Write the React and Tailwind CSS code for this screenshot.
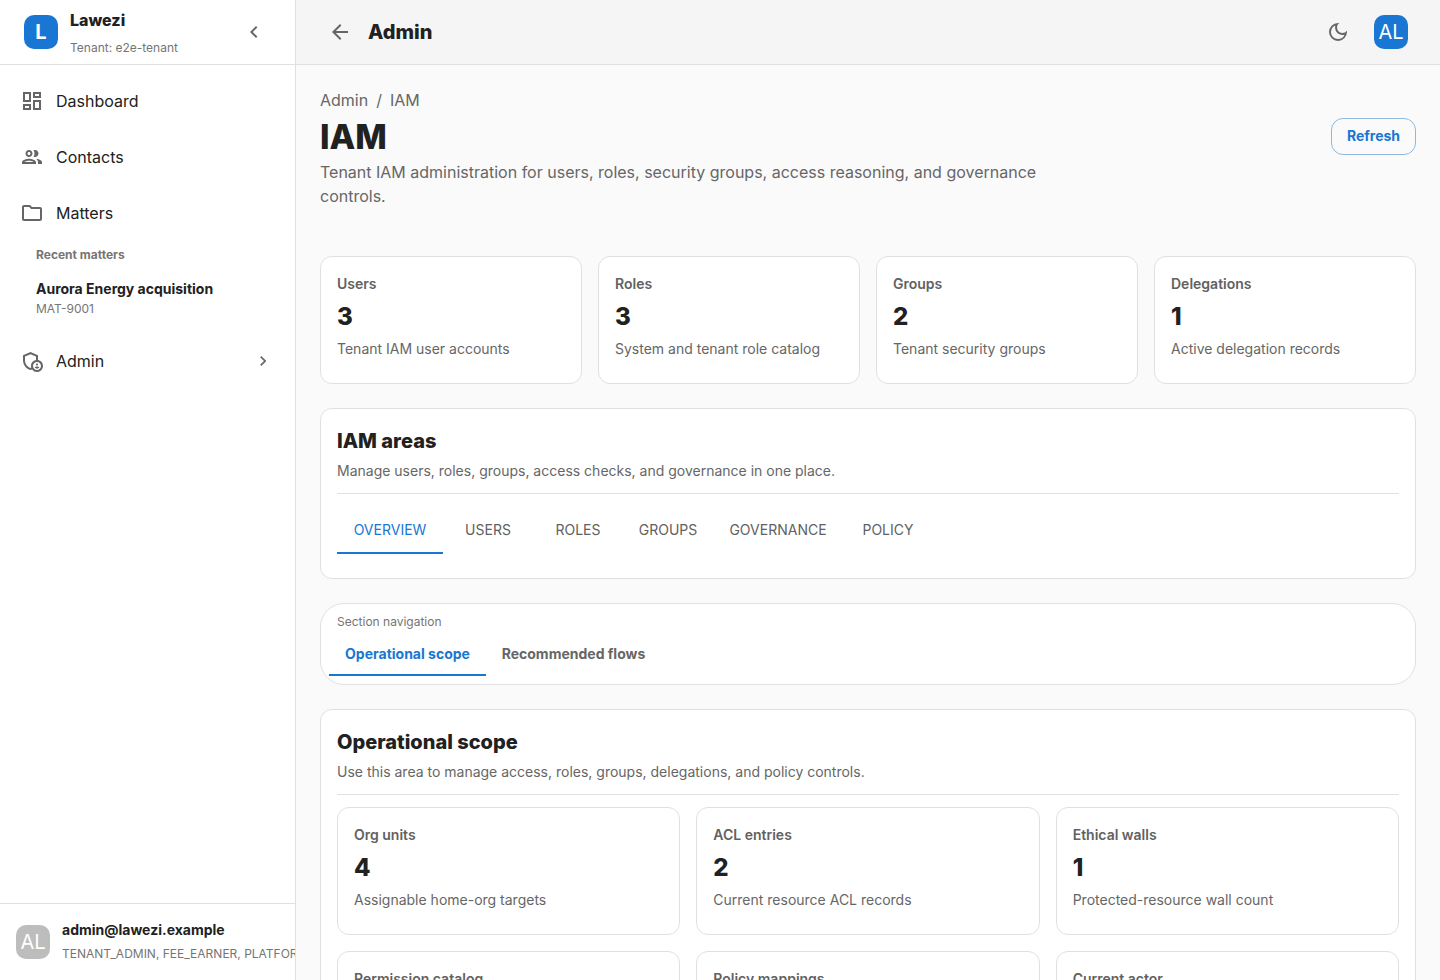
import { MdArrowBack, MdChevronLeft, MdChevronRight, MdOutlineAdminPanelSettings, MdOutlineDarkMode, MdOutlineDashboard, MdOutlineFolder, MdOutlineGroup } from "react-icons/md";

const topStats = [
  { label: "Users", value: "3", note: "Tenant IAM user accounts" },
  { label: "Roles", value: "3", note: "System and tenant role catalog" },
  { label: "Groups", value: "2", note: "Tenant security groups" },
  { label: "Delegations", value: "1", note: "Active delegation records" },
];

const scopeStats = [
  { label: "Org units", value: "4", note: "Assignable home-org targets" },
  { label: "ACL entries", value: "2", note: "Current resource ACL records" },
  { label: "Ethical walls", value: "1", note: "Protected-resource wall count" },
  { label: "Permission catalog", value: "12", note: "Known permissions" },
  { label: "Policy mappings", value: "6", note: "Mapped policy records" },
  { label: "Current actor", value: "1", note: "Signed-in actor" },
];

const tabs = [
  { label: "OVERVIEW", className: "w-[106px] shadow-[inset_0_-2px_0_#1976d2] text-[#1976d2]" },
  { label: "USERS", className: "w-[90px] text-[#616161]" },
  { label: "ROLES", className: "w-[90px] text-[#616161]" },
  { label: "GROUPS", className: "w-[90px] text-[#616161]" },
  { label: "GOVERNANCE", className: "w-[130px] text-[#616161]" },
  { label: "POLICY", className: "w-[90px] text-[#616161]" },
];

function StatCard({ stat }) {
  return (
    <div className="h-[128px] rounded-xl border border-[#e0e0e0] bg-white px-4 pt-[17px]">
      <div className="text-sm leading-5 font-semibold text-[#616161]">{stat.label}</div>
      <div className="mt-[7px] text-[24px] leading-[32px] font-extrabold text-[#212121]">{stat.value}</div>
      <div className="mt-[6px] text-sm leading-5 text-[#666]">{stat.note}</div>
    </div>
  );
}

function NavItem({ icon: Icon, label, right }) {
  return (
    <div className="flex h-12 items-center pl-[20px] pr-[22px]">
      <Icon className="h-6 w-6 text-[#666]" />
      <span className="ml-3 flex-1 text-base text-[#212121]">{label}</span>
      {right}
    </div>
  );
}

export default function App() {
  return (
    <div className="flex h-[980px] overflow-hidden bg-[#fafafa] font-['Inter',sans-serif]">
      {/* Sidebar */}
      <aside className="flex w-[296px] shrink-0 flex-col overflow-hidden border-r border-[#e0e0e0] bg-white">
        <div className="flex h-[65px] shrink-0 items-center border-b border-[#e0e0e0] pl-6 pr-[29px]">
          <div className="flex h-[34px] w-[34px] items-center justify-center rounded-[10px] bg-[#1976d2] text-xl font-bold text-white">L</div>
          <div className="ml-3 flex-1">
            <div className="text-base leading-6 font-extrabold text-[#212121]">Lawezi</div>
            <div className="mt-[6px] -mb-[2px] text-xs leading-5 text-[#757575]">Tenant: e2e-tenant</div>
          </div>
          <MdChevronLeft className="h-6 w-6 text-[#666]" />
        </div>

        <nav className="flex-1 pt-3">
          <NavItem icon={MdOutlineDashboard} label="Dashboard" />
          <div className="mt-2"><NavItem icon={MdOutlineGroup} label="Contacts" /></div>
          <div className="mt-2"><NavItem icon={MdOutlineFolder} label="Matters" /></div>
          <div className="pl-9 pt-2">
            <div className="text-xs leading-5 font-bold text-[#757575]">Recent matters</div>
            <div className="mt-[14px] text-sm leading-5 font-bold text-[#212121]">Aurora Energy acquisition</div>
            <div className="text-xs leading-5 text-[#757575]">MAT-9001</div>
          </div>
          <div className="mt-[18px]">
            <NavItem icon={MdOutlineAdminPanelSettings} label="Admin" right={<MdChevronRight className="h-5 w-5 text-[#666]" />} />
          </div>
        </nav>

        <div className="flex h-[77px] shrink-0 items-center border-t border-[#e0e0e0] pl-4">
          <div className="flex h-[34px] w-[34px] shrink-0 items-center justify-center rounded-[10px] bg-[#bdbdbd] text-xl text-white">AL</div>
          <div className="ml-3 whitespace-nowrap">
            <div className="text-sm leading-5 font-bold text-[#212121]">admin@lawezi.example</div>
            <div className="mt-1 text-xs leading-5 text-[#757575]">TENANT_ADMIN, FEE_EARNER, PLATFORM_ADMIN</div>
          </div>
        </div>
      </aside>

      {/* Main */}
      <div className="flex min-w-0 flex-1 flex-col">
        <header className="flex h-[65px] shrink-0 items-center border-b border-[#e0e0e0] bg-[#f5f5f5] pl-8 pr-[32px]">
          <MdArrowBack className="h-6 w-6 text-[#666]" />
          <div className="ml-4 flex-1 text-xl font-extrabold text-[#212121]">Admin</div>
          <MdOutlineDarkMode className="h-6 w-6 text-[#666]" />
          <div className="ml-6 flex h-[34px] w-[34px] items-center justify-center rounded-[10px] bg-[#1976d2] text-xl text-white">AL</div>
        </header>

        <main className="flex-1 overflow-hidden px-6 pt-[25px]">
          <div className="flex gap-2 text-base leading-5 text-[#666]">
            <span>Admin</span>
            <span>/</span>
            <span>IAM</span>
          </div>
          <div className="flex items-start justify-between">
            <div>
              <h1 className="mt-[6px] text-[33.5px] leading-[42px] font-extrabold text-[#212121]">IAM</h1>
              <p className="mt-[2px] w-[740px] text-base leading-6 text-[#666]">
                Tenant IAM administration for users, roles, security groups, access reasoning, and governance controls.
              </p>
            </div>
            <button className="mt-[8px] h-[37px] w-[85px] rounded-xl border border-[#90b8dd] pb-[2px] text-sm font-bold text-[#1976d2]">Refresh</button>
          </div>

          <div className="mt-[48px] grid grid-cols-4 gap-4">
            {topStats.map((stat) => (
              <StatCard key={stat.label} stat={stat} />
            ))}
          </div>

          <section className="mt-6 h-[171px] rounded-xl border border-[#e0e0e0] bg-white px-4 pt-[17px]">
            <h2 className="text-xl leading-[30px] font-[770] text-[#212121]">IAM areas</h2>
            <p className="mt-[5px] text-sm leading-5 text-[#666]">Manage users, roles, groups, access checks, and governance in one place.</p>
            <div className="mt-[12px] flex border-t border-[#e0e0e0] pt-3">
              {tabs.map((tab) => (
                <div key={tab.label} className={`flex h-12 items-center justify-center text-sm ${tab.className}`}>{tab.label}</div>
              ))}
            </div>
          </section>

          <section className="mt-6 h-[82px] rounded-[24px] border border-[#e0e0e0] bg-white px-2 pt-2">
            <div className="pl-2 text-xs leading-5 text-[#757575]">Section navigation</div>
            <div className="flex">
              <div className="flex h-[44px] w-[157px] items-center justify-center text-sm font-bold text-[#1976d2] shadow-[inset_0_-2px_0_#1976d2]">Operational scope</div>
              <div className="flex h-[44px] w-[175px] items-center justify-center text-sm font-bold text-[#666]">Recommended flows</div>
            </div>
          </section>

          <section className="mt-6 rounded-xl border border-[#e0e0e0] bg-white px-4 pt-[17px] pb-4">
            <h2 className="text-xl leading-[30px] font-[770] text-[#212121]">Operational scope</h2>
            <p className="mt-[5px] text-sm leading-5 text-[#666]">Use this area to manage access, roles, groups, delegations, and policy controls.</p>
            <div className="mt-3 border-t border-[#e0e0e0] pt-3">
              <div className="grid grid-cols-3 gap-4">
                {scopeStats.map((stat) => (
                  <StatCard key={stat.label} stat={stat} />
                ))}
              </div>
            </div>
          </section>
        </main>
      </div>
    </div>
  );
}
